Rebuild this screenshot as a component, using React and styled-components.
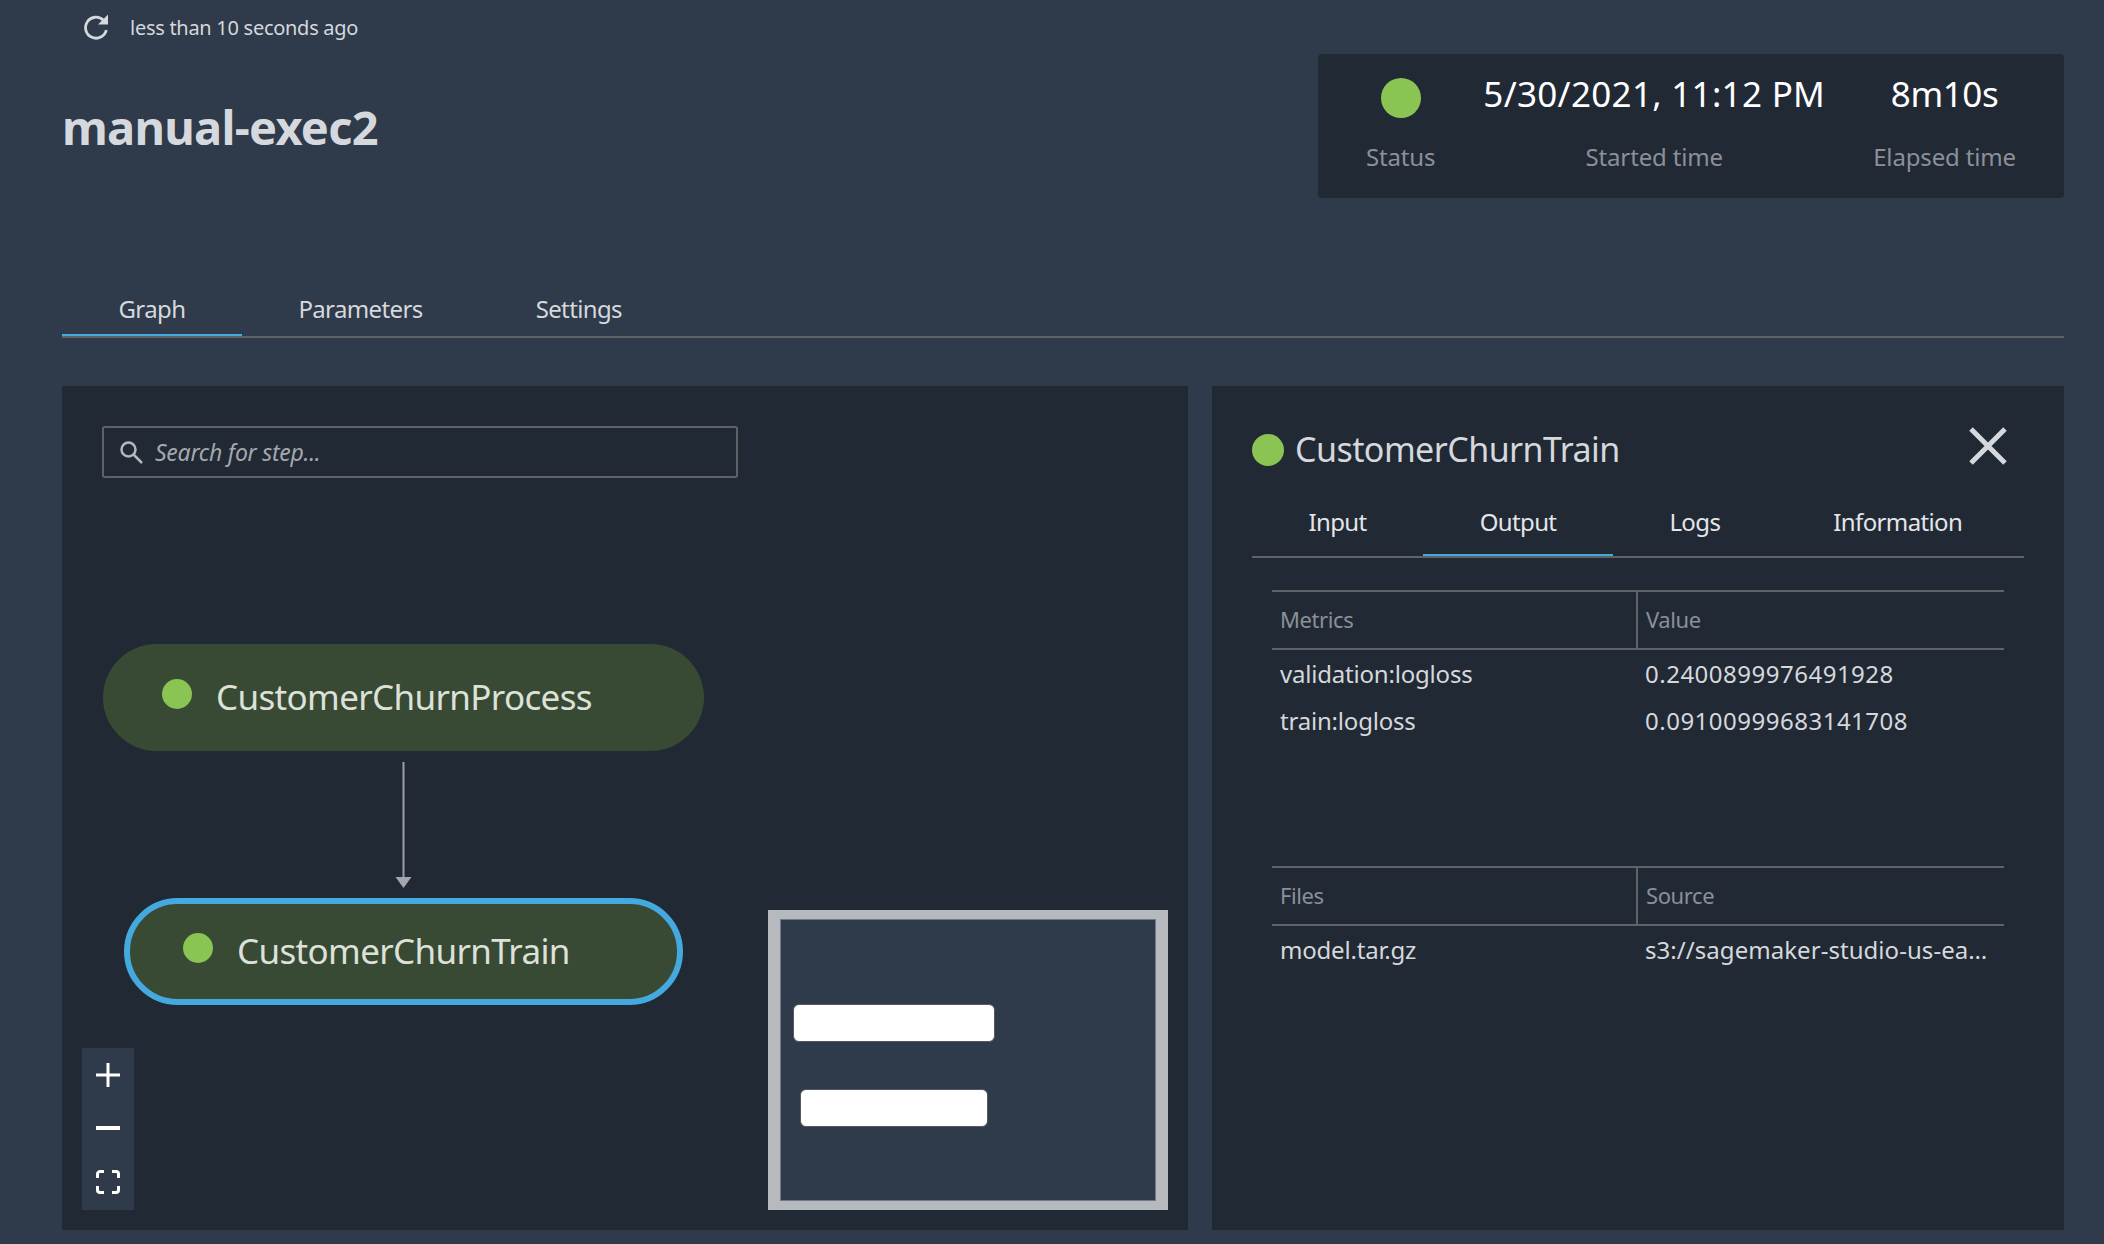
import React from "react";
import styled, { createGlobalStyle } from "styled-components";

const bg = "#2f3a4a";
const panel = "#212934";
const line = "#5f6266";
const blue = "#44a9df";
const green = "#8ac452";
const font = `"Noto Sans", "Open Sans", Arial, sans-serif`;

const Global = createGlobalStyle`
  html, body { margin: 0; padding: 0; background: ${bg}; }
  * { box-sizing: border-box; }
`;

const Page = styled.div`
  width: 2104px;
  height: 1244px;
  padding: 0 40px 14px 62px;
  background: ${bg};
  font-family: ${font};
  display: flex;
  flex-direction: column;
  overflow: hidden;
`;

const RefreshRow = styled.div`
  height: 54px;
  display: flex;
  align-items: center;
  gap: 21px;
  padding-left: 21px;
  color: #d5d8dc;
  font-size: 20px;
  letter-spacing: -0.28px;
`;

const Header = styled.header`
  height: 144px;
  display: flex;
  justify-content: space-between;
  align-items: flex-start;
`;

const Title = styled.h1`
  margin: 40px 0 0;
  font-size: 47px;
  line-height: 66px;
  font-weight: 700;
  letter-spacing: -0.75px;
  color: #d5d8dc;
`;

const StatusCard = styled.div`
  height: 144px;
  display: flex;
  gap: 48px;
  padding: 0 48px;
  background: ${panel};
  border-radius: 4px;
`;

const Stat = styled.div`
  display: flex;
  flex-direction: column;
  align-items: center;
`;

const StatValue = styled.div`
  height: 80px;
  padding-top: ${(p) => p.$top}px;
  font-size: 35px;
  line-height: 46px;
  letter-spacing: ${(p) => p.$spacing}px;
  color: #fff;
`;

const StatLabel = styled.div`
  font-size: 24px;
  line-height: 32px;
  letter-spacing: -0.15px;
  margin-top: 7px;
  color: #8b9099;
`;

const StatusDot = styled.span`
  display: block;
  width: ${(p) => p.$size}px;
  height: ${(p) => p.$size}px;
  border-radius: 50%;
  background: ${green};
  flex: none;
`;

const NodeDot = styled(StatusDot)`
  margin-bottom: 6px;
`;

const TabBar = styled.nav`
  display: flex;
  border-bottom: 2px solid ${line};
  margin-top: ${(p) => p.$top}px;
`;

const Tab = styled.div`
  height: ${(p) => p.$height}px;
  padding: 0 56.5px;
  display: flex;
  align-items: center;
  font-size: 24px;
  letter-spacing: -0.62px;
  white-space: nowrap;
  color: ${(p) => p.$color};
  border-bottom: 2px solid ${(p) => (p.$active ? blue : "transparent")};
`;

const Panels = styled.main`
  margin-top: 48px;
  flex: 1;
  display: grid;
  grid-template-columns: 1126px 852px;
  gap: 24px;
  min-height: 0;
`;

const GraphPanel = styled.section`
  position: relative;
  background: ${panel};
  padding: 40px;
`;

const Search = styled.div`
  width: 636px;
  height: 52px;
  border: 2px solid ${line};
  border-radius: 3px;
  padding-left: 16px;
  display: flex;
  align-items: center;
  gap: 12px;
  color: #a4a8ad;
  font-size: 23px;
  font-style: italic;
  letter-spacing: -0.25px;
`;

const Node = styled.div`
  position: absolute;
  left: ${(p) => p.$left}px;
  top: ${(p) => p.$top}px;
  width: ${(p) => p.$width}px;
  height: 107px;
  padding: 0 0 2px ${(p) => (p.$selected ? 53 : 59)}px;
  border-radius: 54px;
  background: #384a34;
  border: ${(p) => (p.$selected ? `6px solid ${blue}` : "none")};
  display: flex;
  align-items: center;
  gap: 24px;
  font-size: 35px;
  letter-spacing: -0.65px;
  color: #dde1da;
`;

const Connector = styled.svg`
  position: absolute;
  left: 333px;
  top: 376px;
`;

const ZoomControls = styled.div`
  position: absolute;
  left: 20px;
  top: 662px;
  width: 52px;
  height: 162px;
  background: ${bg};
  display: flex;
  flex-direction: column;
`;

const ZoomButton = styled.div`
  width: 52px;
  height: 53.5px;
  display: flex;
  align-items: center;
  justify-content: center;
`;

const Minimap = styled.div`
  position: absolute;
  left: 706px;
  top: 524px;
  width: 400px;
  height: 300px;
  border-style: solid;
  border-color: #b6b9bd;
  border-width: 9px 12px;
`;

const MiniCanvas = styled.div`
  position: relative;
  height: 100%;
  background: ${bg};
  border: 1px solid #6e7a88;
`;

const MiniNode = styled.div`
  position: absolute;
  left: ${(p) => p.$left}px;
  top: ${(p) => p.$top}px;
  width: ${(p) => p.$width}px;
  height: 38px;
  background: #fff;
  border: 1.5px solid #55585c;
  border-radius: 6px;
`;

const DetailPanel = styled.section`
  background: ${panel};
  padding: 40px 40px 0;
`;

const DetailHeader = styled.div`
  height: 48px;
  margin-bottom: 14px;
  display: flex;
  justify-content: space-between;
  align-items: flex-start;
  padding-right: 16px;
`;

const DetailTitle = styled.h2`
  margin: 0;
  height: 48px;
  display: flex;
  align-items: center;
  gap: 11px;
  font-size: 34px;
  font-weight: 400;
  letter-spacing: -0.55px;
  color: #d5d8dc;
`;

const TitleText = styled.span`
  margin-top: -2px;
`;

const Section = styled.div`
  margin: ${(p) => p.$top}px 20px 0;
  min-height: ${(p) => p.$minHeight}px;
`;

const Table = styled.table`
  width: 732px;
  table-layout: fixed;
  border-collapse: collapse;
`;

const Th = styled.th`
  height: 58px;
  padding: 0 8px 2px;
  text-align: left;
  font-weight: 400;
  font-size: 22px;
  letter-spacing: -0.4px;
  color: #8b9099;
  border-top: 2px solid ${line};
  border-bottom: 2px solid ${line};
  &:first-child { width: 365px; border-right: 2px solid ${line}; }
`;

const Td = styled.td`
  height: 48px;
  padding: 0 14px 1px 8px;
  font-size: 24px;
  letter-spacing: ${(p) => p.$spacing}px;
  color: #d5d8dc;
  white-space: nowrap;
  overflow: hidden;
  text-overflow: ellipsis;
`;

const RefreshIcon = () => (
  <svg width="26" height="26" viewBox="0 0 26 26" fill="none">
    <path d="M23.300 16A10.500 10.500 0 1 1 20.500 6.300" stroke="#d5d8dc" strokeWidth="2.800" />
    <path d="M25 0.500V10.500H15Z" fill="#d5d8dc" />
  </svg>
);

const SearchIcon = () => (
  <svg width="23" height="23" viewBox="0 0 23 23" fill="none" stroke="#b4b7bb" strokeWidth="2.500">
    <circle cx="8.500" cy="8.500" r="7" />
    <path d="M13.500 13.500l8.500 8.500" />
  </svg>
);

const CloseIcon = () => (
  <svg width="40" height="40" viewBox="0 0 40 40" fill="none" stroke="#d5d8dc" strokeWidth="5">
    <path d="M3 3l34 34M37 3L3 37" />
  </svg>
);

const PlusIcon = () => (
  <svg width="24" height="24" viewBox="0 0 24 24" fill="none" stroke="#fff" strokeWidth="3">
    <path d="M12 0v24M0 12h24" />
  </svg>
);

const MinusIcon = () => (
  <svg width="24" height="24" viewBox="0 0 24 24" fill="none" stroke="#fff" strokeWidth="4">
    <path d="M0 12h24" />
  </svg>
);

const FitIcon = () => (
  <svg width="24" height="24" viewBox="0 0 24 24" fill="none" stroke="#fff" strokeWidth="3">
    <path d="M1.500 8V4a2.500 2.500 0 0 1 2.500-2.500H8M16 1.500h4A2.500 2.500 0 0 1 22.500 4V8M22.500 16v4a2.500 2.500 0 0 1-2.500 2.500H16M8 22.500H4A2.500 2.500 0 0 1 1.500 20V16" />
  </svg>
);

export default function App() {
  return (
    <Page>
      <Global />
      <RefreshRow>
        <RefreshIcon />
        <span>less than 10 seconds ago</span>
      </RefreshRow>
      <Header>
        <Title>manual-exec2</Title>
        <StatusCard>
          <Stat>
            <StatValue $top={24} $spacing={0}>
              <StatusDot $size={40} />
            </StatValue>
            <StatLabel>Status</StatLabel>
          </Stat>
          <Stat>
            <StatValue $top={17} $spacing={0.3}>5/30/2021, 11:12 PM</StatValue>
            <StatLabel>Started time</StatLabel>
          </Stat>
          <Stat>
            <StatValue $top={17} $spacing={-0.4}>8m10s</StatValue>
            <StatLabel>Elapsed time</StatLabel>
          </Stat>
        </StatusCard>
      </Header>
      <TabBar $top={84}>
        <Tab $height={54} $active $color="#d5d8dc">Graph</Tab>
        <Tab $height={54} $color="#d5d8dc">Parameters</Tab>
        <Tab $height={54} $color="#d5d8dc">Settings</Tab>
      </TabBar>
      <Panels>
        <GraphPanel>
          <Search>
            <SearchIcon />
            <span>Search for step...</span>
          </Search>
          <Node $left={41} $top={258} $width={601}>
            <NodeDot $size={30} />
            CustomerChurnProcess
          </Node>
          <Connector width="20" height="126" viewBox="0 0 20 126">
            <path d="M8.500 0V116" stroke="#9a9ea6" strokeWidth="2" />
            <path d="M0.500 115H16.500L8.500 126Z" fill="#a5a7ad" />
          </Connector>
          <Node $left={62} $top={512} $width={559} $selected>
            <NodeDot $size={30} />
            CustomerChurnTrain
          </Node>
          <ZoomControls>
            <ZoomButton><PlusIcon /></ZoomButton>
            <ZoomButton><MinusIcon /></ZoomButton>
            <ZoomButton><FitIcon /></ZoomButton>
          </ZoomControls>
          <Minimap>
            <MiniCanvas>
              <MiniNode $left={12} $top={84} $width={202} />
              <MiniNode $left={19} $top={169} $width={188} />
            </MiniCanvas>
          </Minimap>
        </GraphPanel>
        <DetailPanel>
          <DetailHeader>
            <DetailTitle>
              <StatusDot $size={32} />
              <TitleText>CustomerChurnTrain</TitleText>
            </DetailTitle>
            <CloseIcon />
          </DetailHeader>
          <TabBar $top={0}>
            <Tab $height={68} $color="#e4e6e9">Input</Tab>
            <Tab $height={68} $active $color="#e4e6e9">Output</Tab>
            <Tab $height={68} $color="#e4e6e9">Logs</Tab>
            <Tab $height={68} $color="#e4e6e9">Information</Tab>
          </TabBar>
          <Section $top={32} $minHeight={276}>
            <Table>
              <thead>
                <tr><Th>Metrics</Th><Th>Value</Th></tr>
              </thead>
              <tbody>
                <tr><Td $spacing={-0.2}>validation:logloss</Td><Td $spacing={0.5}>0.2400899976491928</Td></tr>
                <tr><Td $spacing={-0.2}>train:logloss</Td><Td $spacing={0.5}>0.09100999683141708</Td></tr>
              </tbody>
            </Table>
          </Section>
          <Section $top={0} $minHeight={108}>
            <Table>
              <thead>
                <tr><Th>Files</Th><Th>Source</Th></tr>
              </thead>
              <tbody>
                <tr><Td $spacing={-0.2}>model.tar.gz</Td><Td $spacing={0.05}>s3://sagemaker-studio-us-east-1-pipelines/model.tar.gz</Td></tr>
              </tbody>
            </Table>
          </Section>
        </DetailPanel>
      </Panels>
    </Page>
  );
}
